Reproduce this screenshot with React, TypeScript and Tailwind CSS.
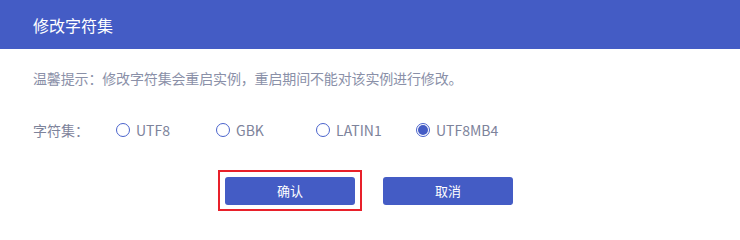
import { useState } from "react";

const CHARSETS = ["UTF8", "GBK", "LATIN1", "UTF8MB4"];

export default function App() {
  const [charset, setCharset] = useState("UTF8MB4");

  return (
    <div
      className="w-[740px] h-[230px] bg-white"
      style={{ fontFamily: '"Noto Sans CJK SC", "Noto Sans", sans-serif' }}
    >
      {/* header */}
      <div className="h-[49px] bg-[#445cc5] px-[33px] flex items-center">
        <h2 className="text-[16px] text-white leading-none">修改字符集</h2>
      </div>

      <div className="px-[33px]">
        <p className="mt-[20px] h-[18px] text-[14px] leading-[18px] tracking-[-0.15px] text-[#8a90a8]">
          温馨提示：修改字符集会重启实例，重启期间不能对该实例进行修改。
        </p>

        {/* charset options */}
        <div className="mt-[33px] h-[20px] flex items-center text-[14px] text-[#7d839b]">
          <span className="w-[83px]">字符集：</span>
          {CHARSETS.map((c) => (
            <label
              key={c}
              className="w-[100px] flex items-center gap-[6px] cursor-pointer"
              onClick={() => setCharset(c)}
            >
              <span className="w-[14px] h-[14px] rounded-full border border-[#4a63cc] flex items-center justify-center">
                {charset === c && <span className="w-[10px] h-[10px] rounded-full bg-[#445cc5]" />}
              </span>
              <span className="leading-none">{c}</span>
            </label>
          ))}
        </div>
      </div>

      {/* actions */}
      <div className="mt-[37px] flex justify-center gap-[28px] pr-[2px]">
        <div className="relative">
          <button className="w-[130px] h-[28px] rounded-[3px] bg-[#445cc5] text-white text-[13px]">
            确认
          </button>
          <div className="absolute -left-[7px] -top-[7px] -right-[7px] -bottom-[6px] border-2 border-[#e8202a] pointer-events-none" />
        </div>
        <button className="w-[130px] h-[28px] rounded-[3px] bg-[#445cc5] text-white text-[13px]">
          取消
        </button>
      </div>
    </div>
  );
}
